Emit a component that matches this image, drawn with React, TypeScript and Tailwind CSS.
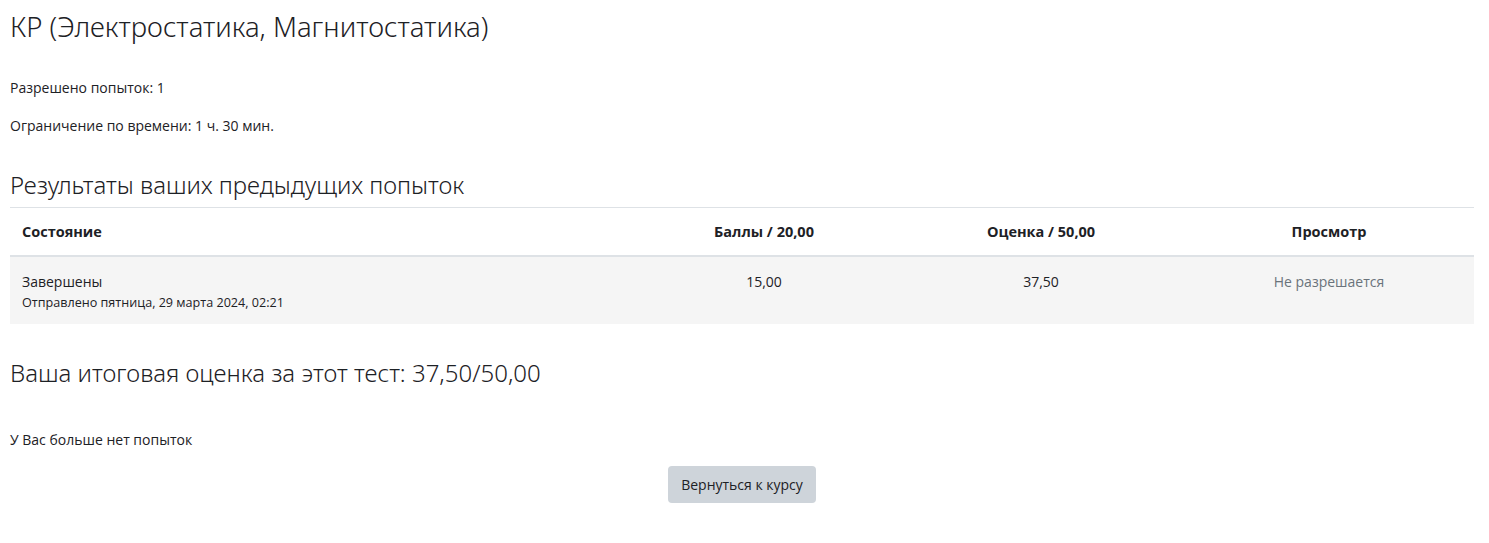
import React from "react";

const font = { fontFamily: '"Open Sans", "Noto Sans", sans-serif' };
const light = { fontFamily: '"Noto Sans", "Open Sans", sans-serif' };

const App = () => {
  return (
    <div className="min-h-[543px] bg-white pl-[10px] pr-[15px] text-[14px] leading-[21px] text-[#1d2125]" style={font}>
      <h2 className="pt-[8px] text-[27.5px] font-light leading-[38px]" style={light}>
        КР (Электростатика, Магнитостатика)
      </h2>

      <div className="mt-[31px] flex flex-col gap-[17px] text-[14px] leading-[21px]">
        <p>Разрешено попыток: 1</p>
        <p>Ограничение по времени: 1 ч. 30 мин.</p>
      </div>

      <h3 className="mt-[33px] text-[24px] font-light leading-[32px]" style={light}>
        Результаты ваших предыдущих попыток
      </h3>

      <div className="mt-[6px] border-t border-[#dee2e6]">
        <div className="grid grid-cols-[620px_268px_286px_1fr] border-b-2 border-[#dee2e6] text-[14.5px] font-bold leading-[21px]">
          <div className="px-3 py-[13px]">Состояние</div>
          <div className="py-[13px] text-center">Баллы / 20,00</div>
          <div className="py-[13px] text-center">Оценка / 50,00</div>
          <div className="py-[13px] text-center">Просмотр</div>
        </div>
        <div className="grid grid-cols-[620px_268px_286px_1fr] bg-[#f5f5f5] text-[14px]">
          <div className="px-3 pt-[14px] pb-[11px]">
            <div className="leading-[21px]">Завершены</div>
            <div className="text-[12.6px] leading-[21px]">Отправлено пятница, 29 марта 2024, 02:21</div>
          </div>
          <div className="pt-[14px] text-center leading-[21px]">15,00</div>
          <div className="pt-[14px] text-center leading-[21px]">37,50</div>
          <div className="pt-[14px] text-center leading-[21px] text-[#6a737b]">Не разрешается</div>
        </div>
      </div>

      <h3 className="mt-[32px] text-[24px] font-light leading-[34px]" style={light}>
        Ваша итоговая оценка за этот тест: 37,50/50,00
      </h3>

      <p className="mt-[39px] text-[14px] leading-[21px]">У Вас больше нет попыток</p>

      <div className="mt-[16px] flex justify-center">
        <button className="rounded-[4px] bg-[#ced4da] px-[13px] py-[8px] text-[14px] leading-[21px] text-[#1d2125]">
          Вернуться к курсу
        </button>
      </div>
    </div>
  );
};

export default App;
